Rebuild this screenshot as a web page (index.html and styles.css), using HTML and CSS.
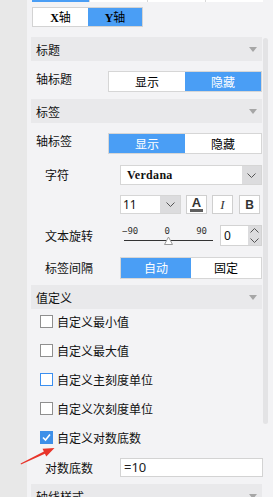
FILE: index.html
```html
<!DOCTYPE html>
<html lang="zh-CN">
<head>
  <meta charset="UTF-8" />
  <meta name="viewport" content="width=device-width, initial-scale=1.0"/>
  <title>坐标轴设置</title>
  <link rel="stylesheet" href="styles.css">
</head>
<body>

  <div class="sidebar"></div>

  <div class="panel">
    <div class="tabs">
      <span class="tab active"></span>
      <span class="tab"></span>
      <span class="tab"></span>
      <span class="tab"></span>
    </div>

    <div class="axis-switch">
      <span class="axis-btn"><b>X</b>轴</span>
      <span class="axis-btn active"><b>Y</b>轴</span>
    </div>

    <div class="section-head">标题<i class="caret"></i></div>
    <div class="row top">
      <span class="label">轴标题</span>
      <div class="seg">
        <span>显示</span>
        <span class="on">隐藏</span>
      </div>
    </div>

    <div class="section-head head-2">标签<i class="caret"></i></div>
    <div class="row top">
      <span class="label">轴标签</span>
      <div class="seg">
        <span class="on">显示</span>
        <span>隐藏</span>
      </div>
    </div>

    <div class="row sub row-font">
      <span class="label">字符</span>
      <div class="select">
        <span class="value serif">Verdana</span>
        <span class="arrow"><svg width="9" height="5" viewBox="0 0 9 5"><path d="M0.5 0.5 L4.5 4.5 L8.5 0.5" fill="none" stroke="#555" stroke-width="1"/></svg></span>
      </div>
    </div>

    <div class="row sub row-size">
      <span class="label"></span>
      <div class="select size-select">
        <span class="value">11</span>
        <span class="arrow"><svg width="9" height="5" viewBox="0 0 9 5"><path d="M0.5 0.5 L4.5 4.5 L8.5 0.5" fill="none" stroke="#555" stroke-width="1"/></svg></span>
      </div>
      <span class="style-btn"><span class="color-a">A</span></span>
      <span class="style-btn italic">I</span>
      <span class="style-btn bold">B</span>
    </div>

    <div class="row sub row-rotate">
      <span class="label">文本旋转</span>
      <div class="slider">
        <div class="ticks">
          <span>−90</span>
          <span>0</span>
          <span>90</span>
        </div>
        <svg class="track" width="95" height="10" viewBox="0 0 95 10">
          <line x1="4" y1="4.5" x2="93" y2="4.5" stroke="#333" stroke-width="1"/>
          <polygon points="48.5,1 44.5,8.5 52.5,8.5" fill="#fff" stroke="#999" stroke-width="1"/>
        </svg>
      </div>
      <div class="spin">
        <span class="spin-value">0</span>
        <span class="spin-btns">
          <svg width="9" height="5" viewBox="0 0 9 5"><path d="M0.5 4.5 L4.5 0.5 L8.5 4.5" fill="none" stroke="#555" stroke-width="1"/></svg>
          <svg width="9" height="5" viewBox="0 0 9 5"><path d="M0.5 0.5 L4.5 4.5 L8.5 0.5" fill="none" stroke="#555" stroke-width="1"/></svg>
        </span>
      </div>
    </div>

    <div class="row sub row-interval">
      <span class="label">标签间隔</span>
      <div class="seg">
        <span class="on">自动</span>
        <span>固定</span>
      </div>
    </div>

    <div class="section-head head-3">值定义<i class="caret"></i></div>
    <div class="checks">
      <label class="check"><span class="box"></span>自定义最小值</label>
      <label class="check"><span class="box"></span>自定义最大值</label>
      <label class="check"><span class="box focus"></span>自定义主刻度单位</label>
      <label class="check"><span class="box"></span>自定义次刻度单位</label>
      <label class="check"><span class="box checked"><svg width="11" height="11" viewBox="0 0 11 11"><path d="M2 5.5 L4.5 8 L9 2.5" fill="none" stroke="#fff" stroke-width="1.6"/></svg></span>自定义对数底数</label>
    </div>

    <div class="row sub row-base">
      <span class="label">对数底数</span>
      <div class="text-input">=10</div>
    </div>

    <div class="section-head head-4">轴线样式<i class="caret"></i></div>

    <div class="scrollbar"></div>
  </div>

  <svg class="note-arrow" width="40" height="24" viewBox="18 444 40 24">
    <polygon points="21,464.5 44.9,453.8 46.3,456.6 54.5,448 42.5,448.8 43.9,451.6 20.6,463.4" fill="#e8352b"/>
  </svg>

</body>
</html>
```

FILE: styles.css
```css
* {
  box-sizing: border-box;
}

body {
  margin: 0;
  height: 497px;
  overflow: hidden;
  display: flex;
  position: relative;
  background-color: #e8e8e8;
  font-family: "Noto Sans CJK SC", "Noto Sans", sans-serif;
  font-size: 12px;
  color: #111;
}

.sidebar {
  width: 27px;
  flex: none;
}

.panel {
  flex: 1;
  position: relative;
  background-color: #f3f3f5;
  padding: 0 11px 0 4px;
}

/* top tab strip, only its bottom edge is visible */
.tabs {
  display: flex;
  height: 2px;
  margin: 0 -1px 0 1px;
  background: #fff;
}

.tab {
  flex: 1;
  border-left: 1px solid #d8d8d8;
}

.tab.active {
  background: #4a9ef5;
  border-left: none;
}

.axis-switch {
  display: inline-flex;
  margin: 5px 0 0 1px;
  border: 1px solid #d3d3d3;
}

.axis-btn {
  width: 55px;
  height: 18px;
  line-height: 18px;
  text-align: center;
  background: #fff;
  color: #000;
}

.axis-btn b {
  font-family: "Liberation Serif", serif;
  font-size: 12px;
}

.axis-btn.active {
  background: #4a9ef5;
  width: 54px;
}

.section-head {
  display: flex;
  justify-content: space-between;
  align-items: center;
  height: 24px;
  margin-top: 10px;
  padding: 0 5px;
  background: #e9e9eb;
  color: #111;
}

.head-2 {
  margin-top: 7px;
}

.head-3 {
  margin-top: 6px;
}

.head-4 {
  margin-top: 7px;
}

.caret {
  width: 0;
  height: 0;
  border-left: 4px solid transparent;
  border-right: 4px solid transparent;
  border-top: 5px solid #a6a6a6;
}

.row {
  display: flex;
  align-items: center;
  margin-top: 10px;
}

.row.top {
  align-items: flex-start;
}

.label {
  width: 77px;
  flex: none;
  padding-left: 5px;
  line-height: 16px;
}

.row.sub .label {
  width: 89px;
  padding-left: 14px;
}

.seg {
  flex: 1;
  display: flex;
  height: 21px;
  border: 1px solid #d6d6d6;
  background: #fff;
}

.seg span {
  flex: 1;
  text-align: center;
  line-height: 19px;
  color: #000;
}

.seg .on {
  background: #4a9ef5;
  color: #fff;
}

.row-font {
  margin-top: 11px;
}

.select {
  flex: 1;
  display: flex;
  height: 20px;
  border: 1px solid #d6d6d6;
  background: #fff;
}

.select .value {
  flex: 1;
  padding-left: 6px;
  line-height: 18px;
}

.serif {
  font-family: "Liberation Serif", serif;
  font-size: 12px;
  font-weight: bold;
  letter-spacing: 0.3px;
}

.select .arrow {
  width: 19px;
  display: flex;
  align-items: center;
  justify-content: center;
  background: #dcdcde;
}

.size-select {
  flex: none;
  width: 61px;
  height: 19px;
}

.size-select .value {
  padding-left: 2px;
  line-height: 17px;
  font-family: "Noto Sans", sans-serif;
}

.size-select .arrow {
  width: 20px;
}

.style-btn {
  width: 21px;
  height: 19px;
  margin-left: 5px;
  border: 1px solid #cfcfcf;
  background: #fff;
  display: flex;
  align-items: center;
  justify-content: center;
  color: #333;
}

.style-btn + .style-btn {
  margin-left: 5px;
}

.style-btn.bold {
  margin-left: 6px;
}

.color-a {
  font-family: "Liberation Sans", sans-serif;
  font-weight: bold;
  font-size: 13px;
  line-height: 11px;
  padding: 0 2px 1px;
  border-bottom: 3px solid #5f5f5f;
}

.italic {
  font-family: "Liberation Serif", serif;
  font-style: italic;
  font-size: 13px;
}

.bold {
  font-family: "Liberation Sans", sans-serif;
  font-weight: bold;
  font-size: 12px;
}

.row-rotate {
  margin-top: 11px;
}

.slider {
  width: 95px;
  flex: none;
  padding-top: 1px;
}

.ticks {
  display: flex;
  justify-content: space-between;
  padding: 0 8px 0 2px;
  font-family: "DejaVu Sans Mono", monospace;
  font-size: 9px;
  line-height: 10px;
  color: #333;
}

.track {
  display: block;
}

.spin {
  display: flex;
  width: 42px;
  height: 21px;
  margin-left: 5px;
  border: 1px solid #d3d3d3;
  background: #fff;
}

.spin-value {
  flex: 1;
  padding-left: 3px;
  line-height: 19px;
  font-family: "Noto Sans", sans-serif;
}

.spin-btns {
  width: 13px;
  display: flex;
  flex-direction: column;
  justify-content: space-around;
  align-items: center;
  background: #dcdcde;
}

.spin-btns svg {
  display: block;
}

.row-interval {
  margin-top: 11px;
}

.row-interval .seg {
  height: 22px;
}

.row-interval .seg span {
  line-height: 20px;
}

.check {
  display: flex;
  align-items: center;
  height: 24px;
  margin-top: 5px;
  padding-left: 9px;
  color: #111;
}

.check:first-child {
  margin-top: 0;
}

.box {
  width: 13px;
  height: 13px;
  margin-right: 4px;
  border: 1px solid #8f8f8f;
  background: #fff;
  display: flex;
  align-items: center;
  justify-content: center;
}

.box.focus {
  border-color: #3b8ff0;
}

.box.checked {
  border-color: #3d8fe8;
  background: #3d8fe8;
}

.row-base {
  margin-top: 9px;
}

.row-base .label {
  padding-left: 17px;
}

.text-input {
  flex: 1;
  height: 19px;
  margin-right: -1px;
  padding-left: 3px;
  border: 1px solid #d3d3d3;
  background: #fff;
  line-height: 17px;
  font-family: "Noto Sans", sans-serif;
  font-size: 13px;
  color: #222;
}

.scrollbar {
  position: absolute;
  left: 236px;
  top: 38px;
  width: 5px;
  height: 386px;
  border-radius: 3px;
  background: #e3e3e5;
}

.note-arrow {
  position: absolute;
  left: 18px;
  top: 444px;
}
```
